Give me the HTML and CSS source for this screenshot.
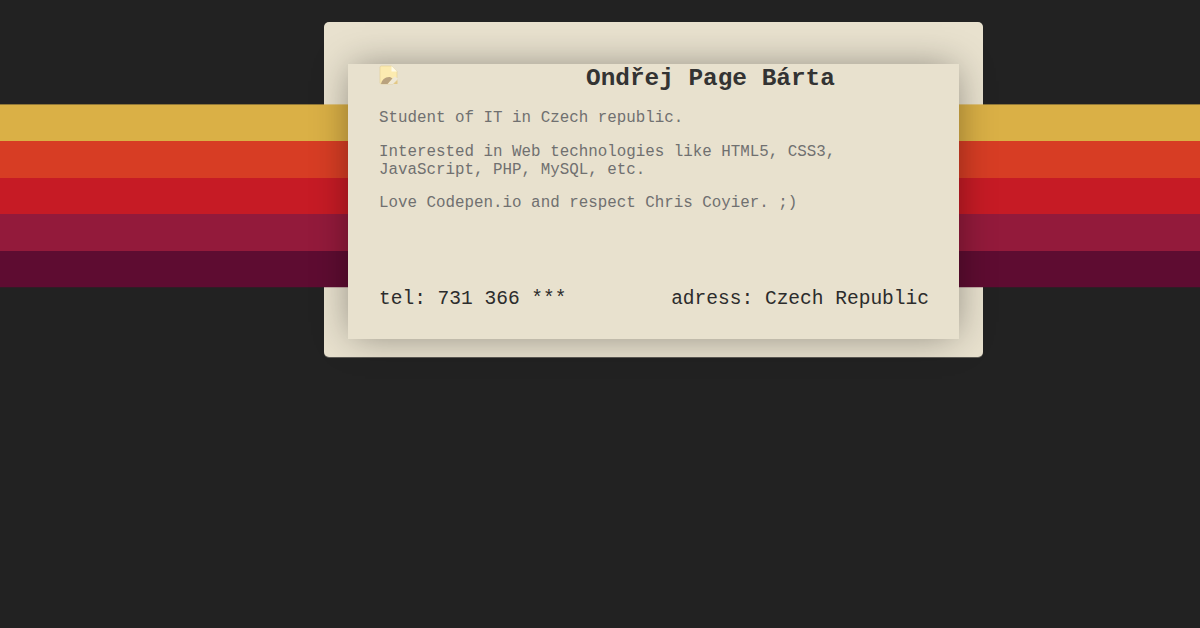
FILE: index.html
```html
<!DOCTYPE html>
<html lang="en">
<head>
<meta charset="utf-8">
<title>Ondřej Page Bárta</title>
<link rel="stylesheet" href="styles.css">
</head>
<body>
<div class="stripes">
  <div class="stripe s1"></div>
  <div class="stripe s2"></div>
  <div class="stripe s3"></div>
  <div class="stripe s4"></div>
  <div class="stripe s5"></div>
</div>
<main class="back">
  <section class="card">
    <header class="head">
      <svg class="broken" width="20" height="20" viewBox="0 0 20 20" aria-hidden="true">
        <path d="M2.500 1h10l5.500 5.500v8l-4 4.500H2.500Q1 19 1 17.500v-15Q1 1 2.500 1z" fill="#fcebb0" stroke="#e0cc94" stroke-width=".6"/>
        <path d="M12.500 1v5.500H18z" fill="#fffbe8"/>
        <path d="M2 19c.5-4 4.500-7.500 9-7l2.500 1.500L8.500 19z" fill="#b9a27e"/>
        <path d="M9 19l6.500-7.500 3.500 2-5 5.500z" fill="#efe8d6"/>
        <path d="M14.500 19l4-4v4z" fill="#e3c784"/>
      </svg>
      <h1 class="name">Ondřej Page Bárta</h1>
    </header>
    <div class="about">
      <p>Student of IT in Czech republic.</p>
      <p>Interested in Web technologies like HTML5, CSS3, JavaScript, PHP, MySQL, etc.</p>
      <p>Love Codepen.io and respect Chris Coyier. ;)</p>
    </div>
    <footer class="foot">
      <span>tel: 731 366 ***</span>
      <span>adress: Czech Republic</span>
    </footer>
  </section>
</main>
</body>
</html>
```
FILE: styles.css
```css
* { box-sizing: border-box; }
html, body { margin: 0; height: 100%; }
body {
  position: relative;
  overflow: hidden;
  background: #222222;
  font-family: "Liberation Mono", "Courier New", monospace;
}
.stripes {
  position: absolute;
  z-index: 1;
  top: 104px;
  left: 0;
  right: 0;
  height: 184px;
  display: flex;
  flex-direction: column;
  border-top: 1px solid rgba(218, 176, 70, 0.6);
  border-bottom: 1px solid rgba(94, 12, 49, 0.25);
}
.stripe { flex: 1; }
.s1 { background: #dab046; }
.s2 { background: #d73d24; }
.s3 { background: #c61b25; }
.s4 { background: #931a3b; }
.s5 { background: #5e0c31; }
.back {
  width: 659px;
  height: 335px;
  margin: 22px 0 0 324px;
  padding: 42px 24px 18px;
  background: #e8e1ce;
  border-radius: 5px;
  box-shadow: 0 1px 0 rgba(232, 225, 206, 0.3);
}
.card {
  position: relative;
  z-index: 2;
  height: 275px;
  padding: 0 30px 0 31px;
  display: flex;
  flex-direction: column;
  background: #e8e1ce;
  box-shadow: 0 0 36px -4px rgba(0, 0, 0, 0.42);
}
.head { display: flex; align-items: flex-start; height: 29.4px; }
.broken { margin-top: 1px; flex: none; }
.name {
  margin: 0 0 0 187px;
  font-size: 24.4px;
  line-height: 30px;
  font-weight: bold;
  color: #333333;
  white-space: nowrap;
}
.about {
  flex: 1;
  font-size: 15.85px;
  line-height: 18px;
  color: #707070;
}
.about p { margin: 15.6px 0; }
.foot {
  display: flex;
  justify-content: space-between;
  margin-bottom: 29px;
  font-size: 19.55px;
  line-height: 22px;
  color: #2c2c2c;
}
```
